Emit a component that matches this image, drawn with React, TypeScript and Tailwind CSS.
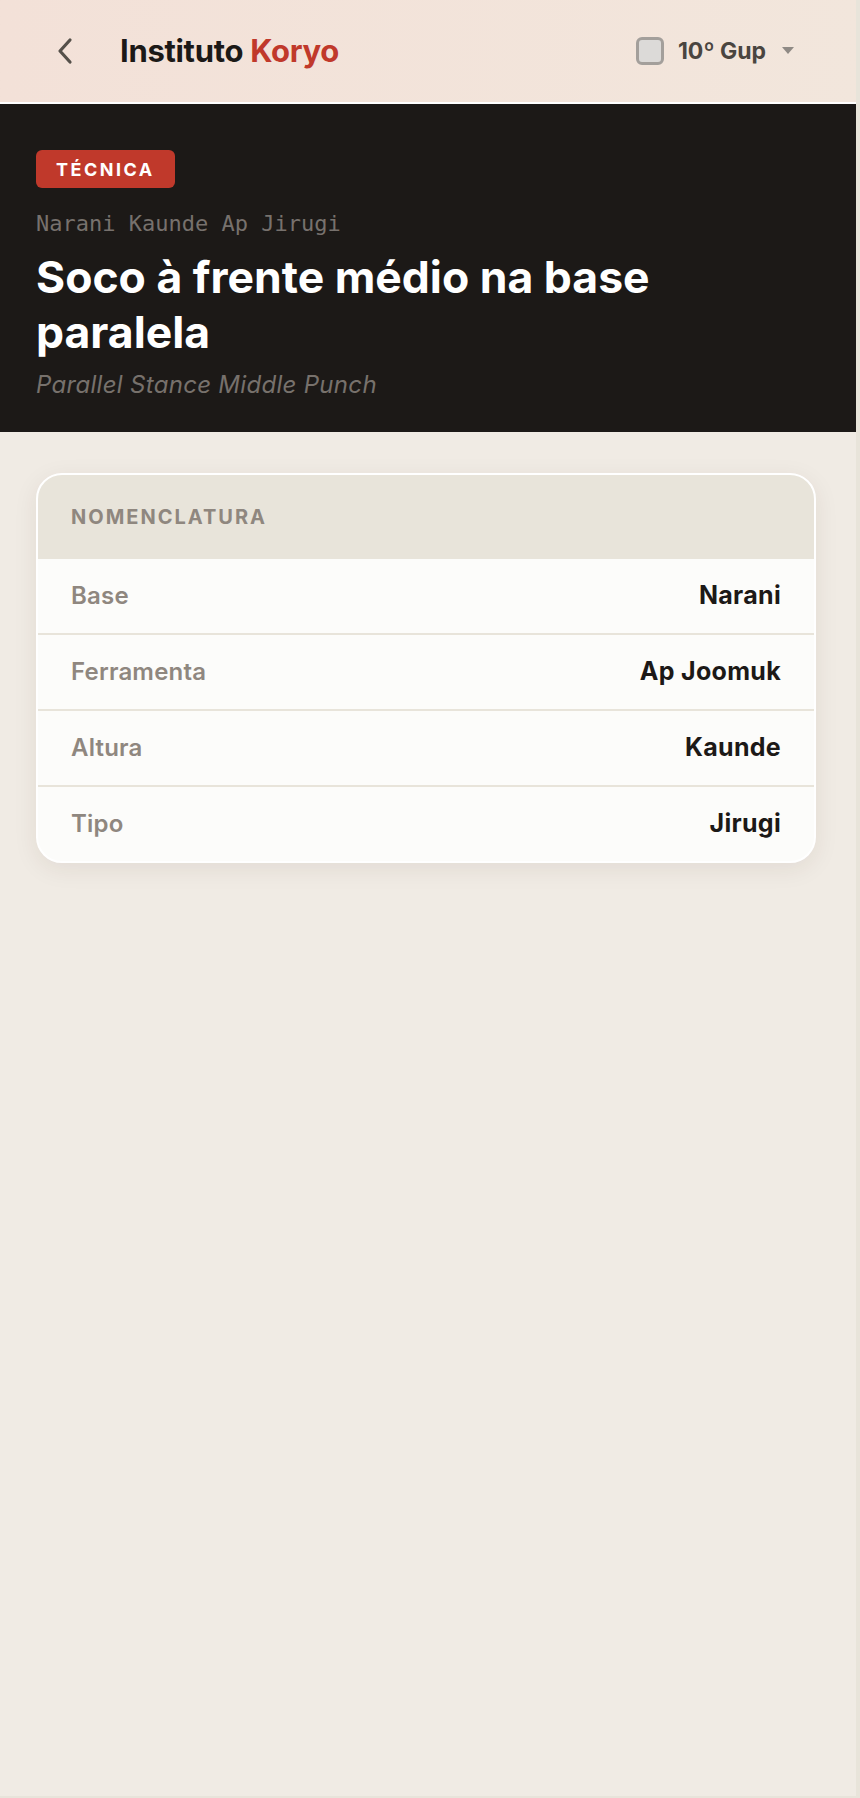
import React from "react";

const sans = { fontFamily: "Inter, 'Noto Sans', sans-serif" };

function Row({ label, value, last }: { label: string; value: string; last?: boolean }) {
  return (
    <div className={`flex items-center justify-between px-[33px] ${last ? "h-[74px]" : "h-[76px] border-b-2 border-[#e8e4da]"}`}>
      <span className="text-[24px] font-semibold tracking-[0.2px] text-[#8f877f]">{label}</span>
      <span className="text-[25px] font-bold tracking-[0.3px] text-[#1c1917]">{value}</span>
    </div>
  );
}

export default function App() {
  return (
    <div className="w-[860px] h-[1798px] bg-[#e8e4da]" style={sans}>
      <div className="w-[856px] h-[1796px] bg-[#f0ebe4] flex flex-col">
        <header className="h-[104px] shrink-0 flex items-center bg-gradient-to-r from-[#f3e1d8] to-[#f2e6dc] border-b-2 border-white">
          <div className="flex items-center ml-[54px]">
            <svg width="22" height="30" viewBox="0 0 22 30" fill="none">
              <path d="M16 4 L6 15 L16 26" stroke="#55504a" strokeWidth="3.2" strokeLinecap="round" strokeLinejoin="round" />
            </svg>
          </div>
          <div className="ml-[44px] text-[31px] font-bold tracking-[-0.3px] text-[#1c1917]">
            Instituto <span className="text-[#c0392b]">Koryo</span>
          </div>
          <div className="ml-auto mr-[62px] flex items-center">
            <div className="w-[28px] h-[28px] rounded-[6px] border-[3px] border-[#a39f9b] bg-[#dcdad8]" />
            <span className="ml-[14px] text-[23px] font-bold text-[#4a4540]">10º Gup</span>
            <svg className="ml-[16px]" width="12" height="8" viewBox="0 0 12 8">
              <path d="M0 0 L12 0 L6 7 Z" fill="#8f8a85" />
            </svg>
          </div>
        </header>

        <section className="bg-[#1c1917] h-[328px] shrink-0 px-[36px] pt-[46px]">
          <div className="inline-flex items-center h-[38px] px-[20px] rounded-[6px] bg-[#c0392b] text-white text-[18px] font-bold tracking-[2.5px]">
            TÉCNICA
          </div>
          <div className="mt-[22px] text-[22px] leading-[28px] text-[#77716d]" style={{ fontFamily: "'DejaVu Sans Mono', monospace" }}>
            Narani Kaunde Ap Jirugi
          </div>
          <h1 className="mt-[12px] text-[44.5px] leading-[55px] font-bold tracking-[0px] text-white max-w-[690px]">
            Soco à frente médio na base paralela
          </h1>
          <div className="mt-[7px] text-[24px] italic tracking-[0.3px] text-[#77716c]">Parallel Stance Middle Punch</div>
        </section>

        <div className="pt-[41px] pl-[36px]">
          <div className="w-[780px] rounded-[26px] border-2 border-white bg-[#fcfcfa] overflow-hidden shadow-[0_6px_24px_rgba(60,40,20,0.08)]">
            <div className="h-[84px] bg-[#e8e4da] flex items-center px-[33px] text-[20px] font-bold tracking-[2px] text-[#8f877f]">
              NOMENCLATURA
            </div>
            <Row label="Base" value="Narani" />
            <Row label="Ferramenta" value="Ap Joomuk" />
            <Row label="Altura" value="Kaunde" />
            <Row label="Tipo" value="Jirugi" last />
          </div>
        </div>
      </div>
    </div>
  );
}
